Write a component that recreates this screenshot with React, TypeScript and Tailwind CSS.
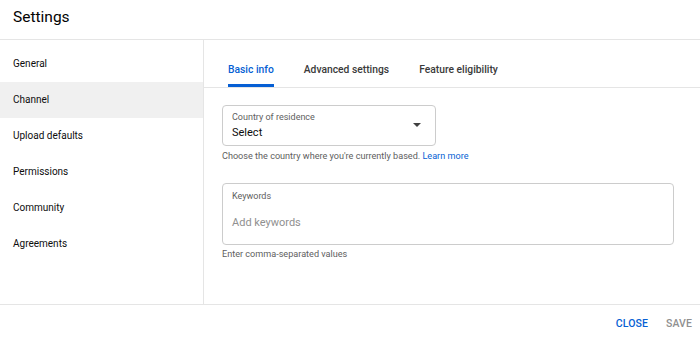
import { useState } from 'react';

const navItems = ['General', 'Channel', 'Upload defaults', 'Permissions', 'Community', 'Agreements'];
const tabs = ['Basic info', 'Advanced settings', 'Feature eligibility'];

export default function App() {
  const [active, setActive] = useState('Channel');
  const [tab, setTab] = useState('Basic info');

  return (
    <div className="w-[700px] h-[341px] bg-white flex flex-col font-['Roboto',sans-serif] text-[#0d0d0d] overflow-hidden">
      {/* Header */}
      <div className="h-[40px] shrink-0 border-b border-[#e5e5e5] flex items-center px-[13px]">
        <h1 className="text-[15.5px] leading-none text-[#030303] -mt-[4px]">Settings</h1>
      </div>

      <div className="flex flex-1 min-h-0">
        {/* Sidebar */}
        <nav className="w-[204px] shrink-0 border-r border-[#e5e5e5] pt-[6px]">
          {navItems.map((item) => (
            <button
              key={item}
              onClick={() => setActive(item)}
              className={`w-full h-[36px] flex items-center px-[13px] pb-[2px] text-[10px] text-left ${
                active === item ? 'bg-[#f0f0f0]' : 'bg-white'
              }`}
            >
              {item}
            </button>
          ))}
        </nav>

        {/* Main */}
        <div className="flex-1 min-w-0">
          <div className="h-[48px] border-b border-[#e5e5e5] flex items-end pl-[24px] gap-[30px]">
            {tabs.map((t) => (
              <button
                key={t}
                onClick={() => setTab(t)}
                className={`h-full flex flex-col justify-end text-[10.3px] leading-[12px] font-medium ${
                  tab === t ? 'text-[#065fd4]' : 'text-[#3a3a3a]'
                }`}
              >
                <span className="pb-[8px]">{t}</span>
                <span className={`h-[3px] w-full ${tab === t ? 'bg-[#065fd4]' : 'bg-transparent'}`} />
              </button>
            ))}
          </div>

          <div className="pl-[18px] pr-[26px] pt-[17px]">
            <div className="w-[214px] h-[41px] border border-[#cccccc] rounded-[4px] flex items-center pl-[9px] pr-[14px]">
              <div className="flex-1 flex flex-col">
                <span className="text-[9px] leading-[12px] text-[#606060]">Country of residence</span>
                <span className="text-[11px] leading-[15px] mt-[2px] text-[#0d0d0d]">Select</span>
              </div>
              <svg width="8" height="4" viewBox="0 0 8 4" className="-mt-[2px]">
                <path d="M0 0 L8 0 L4 4 Z" fill="#404040" />
              </svg>
            </div>
            <p className="mt-[4px] text-[9.1px] leading-[12px] text-[#606060]">
              Choose the country where you're currently based.{' '}
              <span className="text-[#065fd4]">Learn more</span>
            </p>

            <div className="mt-[21px] h-[62px] border border-[#cccccc] rounded-[4px] pl-[9px] pt-[6px]">
              <div className="text-[9px] leading-[12px] text-[#606060]">Keywords</div>
              <div className="mt-[13px] text-[11px] leading-[15px] text-[#909090]">Add keywords</div>
            </div>
            <p className="mt-[3px] text-[9.1px] leading-[12px] text-[#606060]">Enter comma-separated values</p>
          </div>
        </div>
      </div>

      {/* Footer */}
      <div className="h-[37px] shrink-0 border-t border-[#e5e5e5] flex items-center justify-end gap-[18px] pr-[8px]">
        <button className="text-[10.5px] font-medium text-[#065fd4] tracking-[0.1px] mt-[1px]">CLOSE</button>
        <button className="text-[10.5px] font-medium text-[#909090] tracking-[0.1px] mt-[1px]">SAVE</button>
      </div>
    </div>
  );
}
